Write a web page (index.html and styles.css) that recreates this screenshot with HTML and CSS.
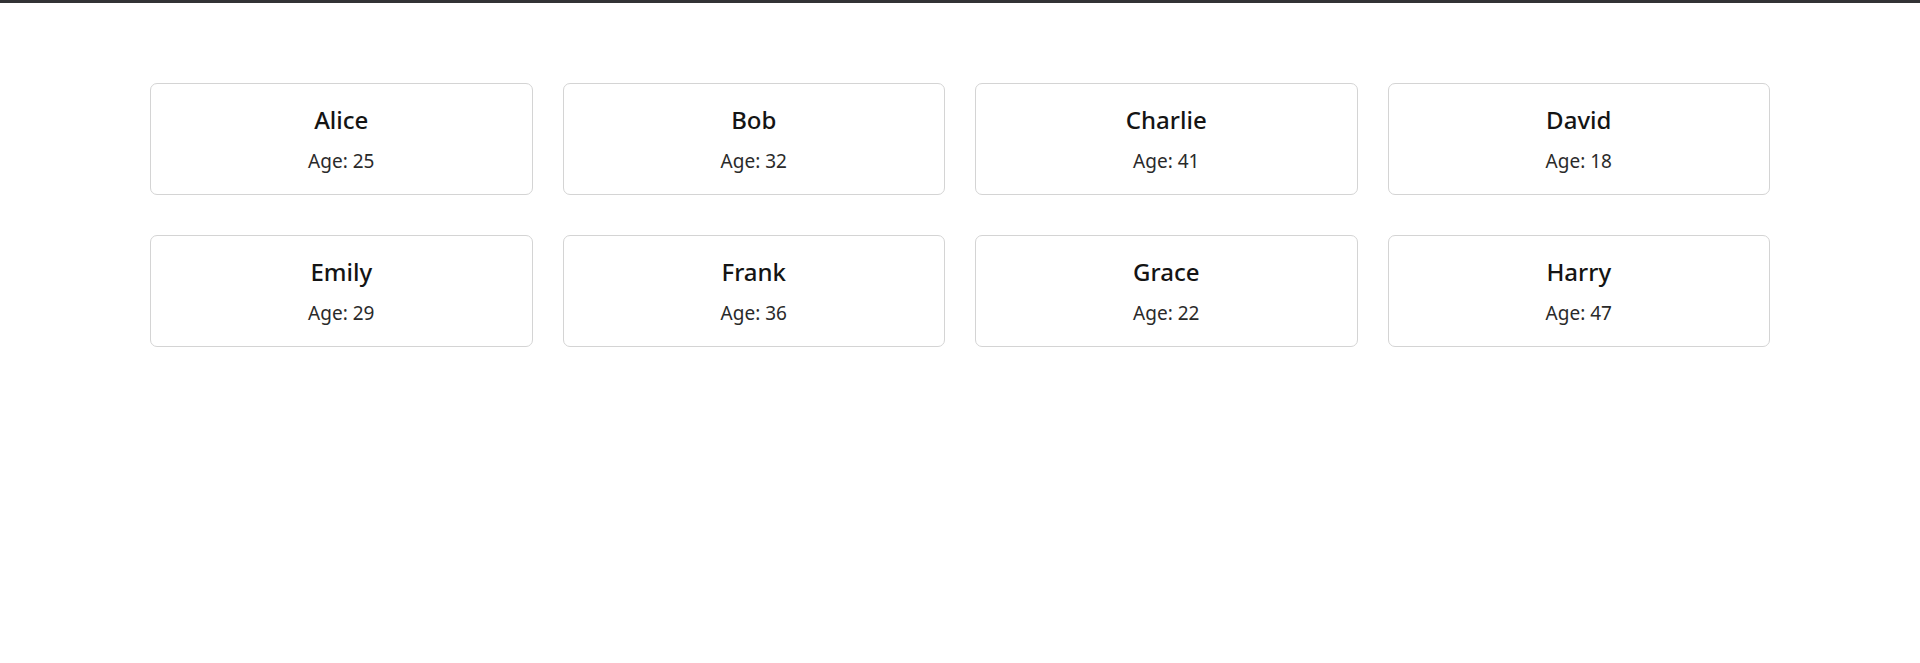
FILE: index.html
```html
<!DOCTYPE html>
<html lang="en">
<head>
<meta charset="utf-8">
<title>People</title>
<link rel="stylesheet" href="styles.css">
</head>
<body>
<div class="topbar"></div>
<main class="grid">
  <div class="card"><div class="name">Alice</div><div class="age">Age: 25</div></div>
  <div class="card"><div class="name">Bob</div><div class="age">Age: 32</div></div>
  <div class="card"><div class="name">Charlie</div><div class="age">Age: 41</div></div>
  <div class="card"><div class="name">David</div><div class="age">Age: 18</div></div>
  <div class="card"><div class="name">Emily</div><div class="age">Age: 29</div></div>
  <div class="card"><div class="name">Frank</div><div class="age">Age: 36</div></div>
  <div class="card"><div class="name">Grace</div><div class="age">Age: 22</div></div>
  <div class="card"><div class="name">Harry</div><div class="age">Age: 47</div></div>
</main>
</body>
</html>
```
FILE: styles.css
```css
html, body {
  margin: 0;
  padding: 0;
  background: #ffffff;
  font-family: "Noto Sans", "Open Sans", sans-serif;
}
.topbar {
  height: 3px;
  background: #323335;
}
.grid {
  display: grid;
  grid-template-columns: repeat(4, 1fr);
  column-gap: 30px;
  row-gap: 40px;
  margin: 0 150px;
  padding-top: 80px;
}
.card {
  border: 1px solid #d4d4d4;
  border-radius: 7px;
  padding: 20px 20px 19px;
  text-align: center;
  background: #fff;
}
.name {
  font-size: 24px;
  line-height: 32px;
  font-weight: 500;
  color: #141414;
  margin-bottom: 11px;
}
.age {
  font-size: 19px;
  line-height: 28px;
  color: #2a2a2a;
}
```
